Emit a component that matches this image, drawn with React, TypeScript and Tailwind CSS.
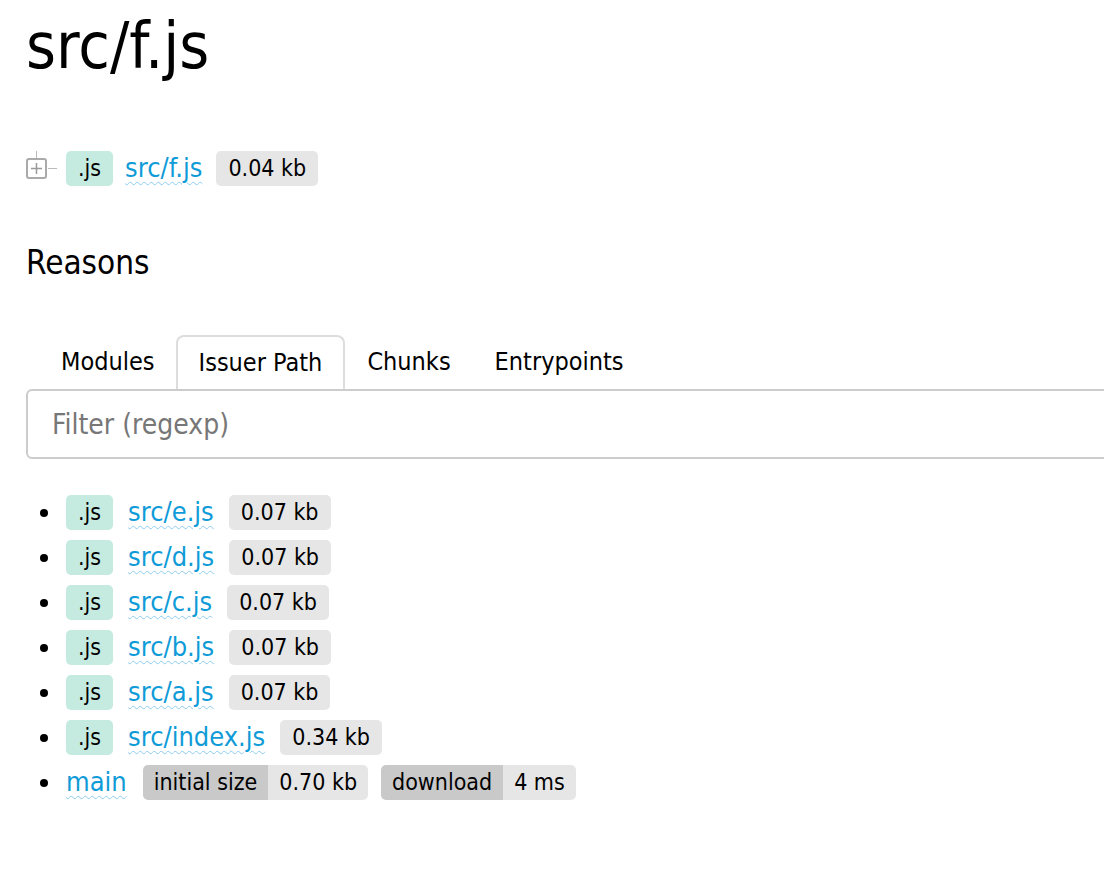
import React from "react";

const font = { fontFamily: '"DejaVu Sans Condensed", "DejaVu Sans", Tahoma, sans-serif' };

function Ext() {
  return (
    <span className="inline-flex items-center h-[35px] px-[12px] rounded-[5px] bg-[#c5eae0] text-black text-[23px]">.js</span>
  );
}

function Size({ children }: { children: React.ReactNode }) {
  return (
    <span className="inline-flex items-center h-[35px] px-[12px] rounded-[5px] bg-[#e6e6e6] text-black text-[23px]">{children}</span>
  );
}

function Link({ children }: { children: React.ReactNode }) {
  return (
    <a className="text-[27px] text-[#0f9bd7] underline decoration-wavy decoration-[#8ccdf0] decoration-1 underline-offset-[4px]">{children}</a>
  );
}

function Pair({ label, value }: { label: string; value: string }) {
  return (
    <span className="inline-flex h-[35px] rounded-[5px] overflow-hidden text-[23px]">
      <span className="flex items-center px-[11px] bg-[#c9c9c9]">{label}</span>
      <span className="flex items-center px-[11px] bg-[#e6e6e6]">{value}</span>
    </span>
  );
}

const rows = [
  ["src/e.js", "0.07 kb"],
  ["src/d.js", "0.07 kb"],
  ["src/c.js", "0.07 kb"],
  ["src/b.js", "0.07 kb"],
  ["src/a.js", "0.07 kb"],
  ["src/index.js", "0.34 kb"],
];

export default function App() {
  return (
    <div className="bg-white min-h-screen w-full overflow-hidden text-black" style={font}>
      <div className="pl-[26px]">
        <h1 className="text-[64px] leading-none mt-[14px] h-[64px]">src/f.js</h1>

        <div className="mt-[73px] flex items-center h-[35px]">
          <svg width="34" height="36" viewBox="0 0 34 36" className="mr-[6px]">
            <line x1="10.5" y1="0" x2="10.5" y2="8" stroke="#bbb" strokeWidth="1" />
            <rect x="1" y="8" width="19" height="19" rx="2" fill="none" stroke="#aaa" strokeWidth="2" />
            <line x1="5" y1="17.5" x2="16" y2="17.5" stroke="#999" strokeWidth="1.5" />
            <line x1="10.5" y1="12" x2="10.5" y2="23" stroke="#999" strokeWidth="1.5" />
            <line x1="22" y1="17.5" x2="31" y2="17.5" stroke="#bbb" strokeWidth="1" />
          </svg>
          <Ext />
          <span className="ml-[12px]"><Link>src/f.js</Link></span>
          <span className="ml-[14px]"><Size>0.04 kb</Size></span>
        </div>

        <h2 className="text-[33px] leading-none mt-[60px]">Reasons</h2>

        <div className="mt-[56px] flex text-[25px] pl-[14px] h-[54px]">
          <div className="flex items-center px-[21px]">Modules</div>
          <div className="flex items-center px-[21px] border-2 border-b-0 border-[#ddd] rounded-t-[8px]">Issuer Path</div>
          <div className="flex items-center px-[22px]">Chunks</div>
          <div className="flex items-center px-[22px]">Entrypoints</div>
        </div>
        <input
          className="block w-[1100px] h-[70px] border-2 border-[#ccc] rounded-[6px] px-[24px] text-[28px] outline-none placeholder:text-[#777]"
          placeholder="Filter (regexp)"
          style={font}
        />

        <ul className="mt-[31px] pl-[14px]">
          {rows.map(([name, size]) => (
            <li key={name} className="flex items-center h-[45px]">
              <span className="w-[8px] h-[8px] rounded-full bg-black mr-[18px]" />
              <Ext />
              <span className="ml-[15px]"><Link>{name}</Link></span>
              <span className="ml-[15px]"><Size>{size}</Size></span>
            </li>
          ))}
          <li className="flex items-center h-[45px]">
            <span className="w-[8px] h-[8px] rounded-full bg-black mr-[18px]" />
            <Link>main</Link>
            <span className="ml-[16px]"><Pair label="initial size" value="0.70 kb" /></span>
            <span className="ml-[13px]"><Pair label="download" value="4 ms" /></span>
          </li>
        </ul>
      </div>
    </div>
  );
}
